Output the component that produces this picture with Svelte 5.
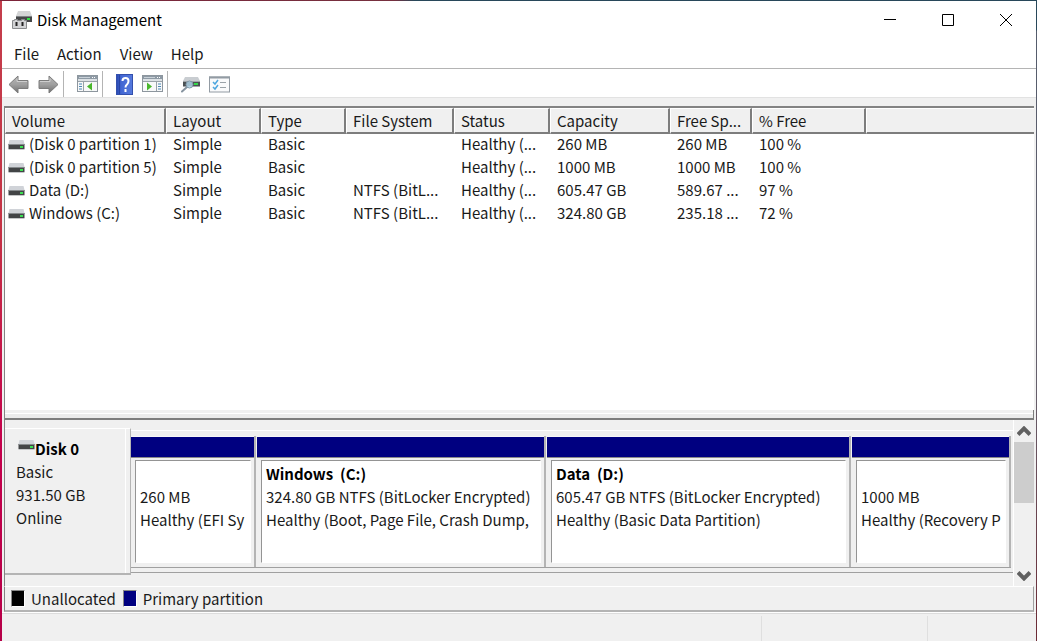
<script>
  const menus = ['File', 'Action', 'View', 'Help'];
  const columns = [
    ['Volume', 161], ['Layout', 95], ['Type', 85], ['File System', 108],
    ['Status', 96], ['Capacity', 120], ['Free Sp...', 82], ['% Free', 114]
  ];
  const rows = [
    ['(Disk 0 partition 1)', 'Simple', 'Basic', '', 'Healthy (...', '260 MB', '260 MB', '100 %'],
    ['(Disk 0 partition 5)', 'Simple', 'Basic', '', 'Healthy (...', '1000 MB', '1000 MB', '100 %'],
    ['Data (D:)', 'Simple', 'Basic', 'NTFS (BitL...', 'Healthy (...', '605.47 GB', '589.67 ...', '97 %'],
    ['Windows (C:)', 'Simple', 'Basic', 'NTFS (BitL...', 'Healthy (...', '324.80 GB', '235.18 ...', '72 %']
  ];
  const partitions = [
    { name: '', size: '260 MB', status: 'Healthy (EFI Sy' },
    { name: 'Windows  (C:)', size: '324.80 GB NTFS (BitLocker Encrypted)', status: 'Healthy (Boot, Page File, Crash Dump,' },
    { name: 'Data  (D:)', size: '605.47 GB NTFS (BitLocker Encrypted)', status: 'Healthy (Basic Data Partition)' },
    { name: '', size: '1000 MB', status: 'Healthy (Recovery P' }
  ];
</script>

{#snippet drive()}
  <svg class="drive" width="17" height="10" viewBox="0 0 17 10" aria-hidden="true">
    <path d="M1.500 0h14l1 4H.5z" fill="#d0d3d8" />
    <rect x=".5" y="4" width="16" height="5" fill="#424446" />
    <rect x=".5" y="4" width="16" height="1" fill="#85898c" />
    <rect x=".5" y="9" width="16" height="1" fill="#c4c6c8" />
    <rect x="12" y="6" width="3" height="2" fill="#3be052" />
  </svg>
{/snippet}

{#snippet paneWindow(flip)}
  <svg width="21" height="18" viewBox="0 0 21 18" aria-hidden="true">
    <rect x=".5" y=".5" width="20" height="16" fill="#f7f8f9" stroke="#8d969e" />
    <rect x="1" y="1" width="19" height="3" fill="#8e9aa5" />
    <path d="M2 2.500h11" stroke="#c9d1d8" />
    <path d="M15 2.500h1M17 2.500h1" stroke="#fff" />
    <rect x="1" y="4" width="19" height="2" fill="#dce1e5" />
    <path d="M1 6.500h19" stroke="#98a1a8" />
    {#if flip}
      <path d="M14.500 7v9" stroke="#98a1a8" />
      <path d="M16 9h3M16 11.500h3M16 14h3" stroke="#4b86b4" />
      <path d="M5 7.500l5 4-5 4z" fill="#49b72c" />
    {:else}
      <path d="M6.500 7v9" stroke="#98a1a8" />
      <path d="M2 9h3M2 11.500h3M2 14h3" stroke="#4b86b4" />
      <path d="M15 7.500l-5 4 5 4z" fill="#49b72c" />
    {/if}
  </svg>
{/snippet}

{#snippet arrow(flip)}
  <svg width="21" height="19" viewBox="0 0 21 19" aria-hidden="true">
    <defs>
      <linearGradient id={flip ? 'fwd' : 'back'} x2="0" y2="1">
        <stop offset="0" stop-color="#b5b5b5" /><stop offset=".5" stop-color="#a0a0a0" /><stop offset="1" stop-color="#6f6f6f" />
      </linearGradient>
    </defs>
    <path
      d={flip ? 'M20 9.500L11 1v4.500H1v8h10V18z' : 'M1 9.500L10 1v4.500h10v8H10V18z'}
      fill="url(#{flip ? 'fwd' : 'back'})" stroke="#7c7c7c" stroke-linejoin="round" />
    <path d={flip ? 'M2 6.500h10V3.500' : 'M19 6.500H9V3.500'} fill="none" stroke="#cecece" />
  </svg>
{/snippet}

<div class="window">
  <header class="title">
    <svg class="app-icon" width="21" height="20" viewBox="0 0 21 20" aria-hidden="true">
      <path d="M6 1h12l2 5H4z" fill="#d4d5d6" />
      <path d="M4 6h16v6H4z" fill="#454748" />
      <path d="M4 6.500h16" stroke="#808386" />
      <rect x="15" y="8" width="3" height="2" fill="#30dc45" />
      <path d="M.5 10.500h2v-1h3v1h4v-1h3v1h2v8H.5z" fill="#d2d3d5" stroke="#8a8c8e" />
      <path d="M4.500 12v4M10.500 12v4" stroke="#222" stroke-width="2" />
    </svg>
    <h1>Disk Management</h1>
    <div class="controls">
      <button aria-label="Minimize"><svg width="14" height="14" viewBox="0 0 14 14"><path d="M1 6.500h12" stroke="#000" /></svg></button>
      <button aria-label="Maximize"><svg width="14" height="14" viewBox="0 0 14 14"><path d="M1.500 1.500h11v11h-11z" fill="none" stroke="#000" /></svg></button>
      <button aria-label="Close"><svg width="14" height="14" viewBox="0 0 14 14"><path d="M1 1l12 12M13 1L1 13" stroke="#000" /></svg></button>
    </div>
  </header>

  <nav class="menu">
    {#each menus as item}<button>{item}</button>{/each}
  </nav>

  <div class="toolbar">
    <button aria-label="Back">{@render arrow(false)}</button>
    <button aria-label="Forward">{@render arrow(true)}</button>
    <span class="sep"></span>
    <button aria-label="Show or hide console tree">{@render paneWindow(false)}</button>
    <span class="sep"></span>
    <button aria-label="Help topics">
      <svg width="17" height="21" viewBox="0 0 17 21" aria-hidden="true">
        <defs><linearGradient id="book"><stop offset="0" stop-color="#2948b0" /><stop offset=".3" stop-color="#4267d3" /><stop offset="1" stop-color="#5579dd" /></linearGradient></defs>
        <rect x=".5" y=".5" width="16" height="20" fill="url(#book)" stroke="#3350ad" />
        <path d="M3.500 1v19" stroke="#2845a6" />
        <path d="M6.500 7Q6.500 4 9.500 4T12.500 7Q12.500 9 11 10.500Q9.500 11.500 9.500 13.500" fill="none" stroke="#fff" stroke-width="2" />
        <rect x="8.500" y="15" width="2" height="3" fill="#fff" />
      </svg>
    </button>
    <button aria-label="Show or hide action pane">{@render paneWindow(true)}</button>
    <span class="sep"></span>
    <button aria-label="Refresh disks">
      <svg width="19" height="18" viewBox="0 0 19 18" aria-hidden="true">
        <path d="M4 2h13l2 4H2z" fill="#c9cdd1" />
        <rect x="2" y="6" width="17" height="5" fill="#4b5053" />
        <path d="M2 6.500h17M2 11.500h17" stroke="#a0a5a9" />
        <rect x="13" y="8" width="4" height="2" fill="#35d84b" />
        <path d="M6 12l-5 4.500" stroke="#8794a0" stroke-width="2" stroke-linecap="round" />
        <circle cx="8.500" cy="9.500" r="3.500" fill="#b4d9ef" fill-opacity=".8" stroke="#8197a7" />
      </svg>
    </button>
    <button aria-label="Properties">
      <svg width="21" height="17" viewBox="0 0 21 17" aria-hidden="true">
        <rect x=".5" y="1" width="20" height="15" fill="#f9fafb" stroke="#929ba3" />
        <path d="M0 1.500h21" stroke="#929ba3" stroke-width="2" />
        <path d="M4 6l2 2 3-4M4 11l2 2 3-4" fill="none" stroke="#4ca6df" stroke-width="1.500" />
        <path d="M11 6.500h6M11 11.500h6" stroke="#9aa2a8" />
      </svg>
    </button>
  </div>

  <main>
    <section class="volumes" aria-label="Volumes">
      <table>
        <colgroup>
          {#each columns as [, width]}<col style="width: {width}px" />{/each}
          <col />
        </colgroup>
        <thead>
          <tr>
            {#each columns as [label]}<th scope="col">{label}</th>{/each}
            <th></th>
          </tr>
        </thead>
        <tbody>
          {#each rows as row}
            <tr>
              {#each row as cell, i}
                <td>{#if i === 0}{@render drive()}{/if}{cell}</td>
              {/each}
              <td></td>
            </tr>
          {/each}
        </tbody>
      </table>
    </section>
    <div class="splitter"></div>

    <section class="graph" aria-label="Disks">
      <div class="disk">
        <div class="disk-name">{@render drive()}<b>Disk 0</b></div>
        <div>Basic</div>
        <div>931.50 GB</div>
        <div>Online</div>
      </div>
      <div class="strip">
        <div class="parts">
          {#each partitions as p}
            <article>
              <div class="bar"></div>
              <div class="box">
                <b>{p.name}</b>
                <span>{p.size}</span>
                <span>{p.status}</span>
              </div>
            </article>
          {/each}
        </div>
      </div>
      <div class="scroll">
        <button aria-label="Scroll up"><svg width="14" height="11" viewBox="0 0 14 11"><path d="M1 8.500l6-6 6 6" fill="none" stroke="#606060" stroke-width="4" /></svg></button>
        <div class="track"><div class="thumb"></div></div>
        <button aria-label="Scroll down"><svg width="14" height="11" viewBox="0 0 14 11"><path d="M1 2.500l6 6 6-6" fill="none" stroke="#606060" stroke-width="4" /></svg></button>
      </div>
    </section>

    <div class="legend">
      <i class="swatch none"></i><span>Unallocated</span>
      <i class="swatch primary"></i><span>Primary partition</span>
    </div>
  </main>

  <footer><span></span><span></span><span></span></footer>
</div>

<style>
  :global(body) { margin: 0; }
  .window, .window * { box-sizing: border-box; }
  .window {
    min-height: 100vh;
    display: flex;
    flex-direction: column;
    padding: 1px 1px 0 2px;
    background:
      linear-gradient(90deg, #7c2338, #76303f 38%, #28485a 40%, #28485a) top / 100% 1px no-repeat,
      linear-gradient(#28485a 30px, #555c6c 31px, #66606c 60%, #6d2a35) right / 1px 100% no-repeat,
      linear-gradient(#c43e4c, #c53345 35%, #c4004c 70%, #b60048) left / 2px 100% no-repeat;
    font-family: "Noto Sans CJK SC", "Noto Sans", sans-serif;
    font-feature-settings: "zero";
    font-size: 15px;
    line-height: 23px;
    color: #1a1a1a;
  }
  button {
    padding: 0;
    border: 0;
    background: none;
    font: inherit;
    color: inherit;
    display: flex;
    align-items: center;
    justify-content: center;
  }
  svg { display: block; flex: none; }

  .title { display: flex; align-items: center; height: 37px; padding-left: 10px; background: #fff; }
  h1 { margin: 0 0 0 4px; font-size: 15px; font-weight: 400; color: #000; }
  .controls { display: flex; margin-left: auto; padding-right: 1px; }
  .controls button { width: 58px; height: 38px; }

  .menu { display: flex; gap: 18px; height: 31px; padding-left: 12px; background: #fff; border-bottom: 1px solid #b4b4b4; }
  .toolbar { display: flex; align-items: center; gap: 10px; height: 28px; padding: 2px 0 0 6px; background: #fff; }
  .toolbar button + button { margin-left: -1px; }
  .sep { width: 1px; height: 26px; margin: 0 3px 0 -6px; background: #b4b4b4; }

  main {
    flex: 1;
    display: flex;
    flex-direction: column;
    padding: 8px 2px 0;
    background: #f0f0f0;
    border-top: 1px solid #e2e2e2;
  }
  .volumes {
    flex: 1;
    background: #fff;
    border-top: 2px solid #838383;
    border-left: 1px solid #838383;
  }
  table { width: 100%; table-layout: fixed; border-collapse: separate; border-spacing: 0; }
  th {
    height: 26px;
    padding: 0 0 0 6px;
    background: #f0f0f0;
    border: solid;
    border-width: 1px 2px 2px 1px;
    border-color: #fff #7d7d7d #7d7d7d #fff;
    font-weight: 400;
    text-align: left;
    white-space: nowrap;
  }
  th:last-child { border-right: 0; }
  td { height: 23px; padding: 0 0 0 7px; line-height: 20px; vertical-align: top; white-space: nowrap; }
  td:first-child { padding-left: 3px; }
  td .drive { display: inline-block; margin-right: 4px; vertical-align: 0; }

  .splitter {
    height: 10px;
    background: linear-gradient(#f0f0f0 3px, #fff 3px, #fff 4px, #ebebeb 4px);
    border-bottom: 2px solid #7d7d7d;
    border-left: 1px solid #838383;
    border-right: 1px solid #7d7d7d;
  }

  .graph { display: flex; height: 166px; border-left: 1px solid #838383; }
  .disk {
    width: 126px;
    margin: 8px 0 11px;
    padding: 8px 0 0 11px;
    border-top: 1px solid #fff;
    border-right: 1px solid #b4b4b4;
    border-bottom: 2px solid #b4b4b4;
    background: linear-gradient(90deg, #f0f0f0 120px, #fff 120px, #fff 121px, #f0f0f0 121px);
  }
  .disk-name { display: flex; padding-left: 2px; }
  .disk-name .drive { margin-top: 3px; }
  b { font-weight: 700; color: #000; }
  .strip {
    flex: 1;
    min-width: 0;
    margin: 10px 0 13px;
    padding: 5px 2px 4px 0;
    border-top: 1px solid #fff;
    border-bottom: 1px solid #a0a0a0;
  }
  .parts { display: grid; height: 100%; grid-template-columns: 125fr 290fr 305fr 160fr; border-bottom: 1px solid #a0a0a0; }
  article { min-width: 0; display: flex; flex-direction: column; border-right: 2px solid #b4b4b4; }
  .bar { height: 22px; margin-left: 1px; background: #000080; border-top: 1px solid #f8f8f8; border-bottom: 1px solid #8a8a8a; }
  .box {
    flex: 1;
    display: flex;
    flex-direction: column;
    margin: 2px 3px 4px 5px;
    padding: 1px 0 0 4px;
    overflow: hidden;
    white-space: pre;
    background: #fff;
    border: solid;
    border-width: 1px;
    border-color: #949494 #fff #fff #949494;
  }
  article:first-child .bar { margin-left: 0; }
  article:first-child .box { margin-left: 4px; }
  .box b, .box span { min-height: 23px; }

  .scroll { width: 21px; display: flex; flex-direction: column; border-left: 1px solid #fff; }
  .scroll button { height: 22px; }
  .track { flex: 1; }
  .thumb { height: 61px; background: #cdcdcd; }

  .legend {
    display: flex;
    align-items: center;
    height: 26px;
    padding-left: 6px;
    border: solid;
    border-width: 1px 1px 2px;
    border-color: #fff #a0a0a0 #b4b4b4 #838383;
  }
  .swatch { width: 14px; height: 17px; margin-right: 6px; border: 1px solid; border-color: #888 #fff #fff #888; }
  .none { background: #000; }
  .primary { margin-left: 7px; background: #000080; }

  footer {
    display: grid;
    grid-template-columns: 759fr 166fr 109fr;
    height: 29px;
    padding-top: 3px;
    background: #f0f0f0;
    border-top: 1px solid #fff;
    box-shadow: inset 0 1px #dcdcdc;
  }
  footer span + span { border-left: 1px solid #dfdfdf; }
</style>
